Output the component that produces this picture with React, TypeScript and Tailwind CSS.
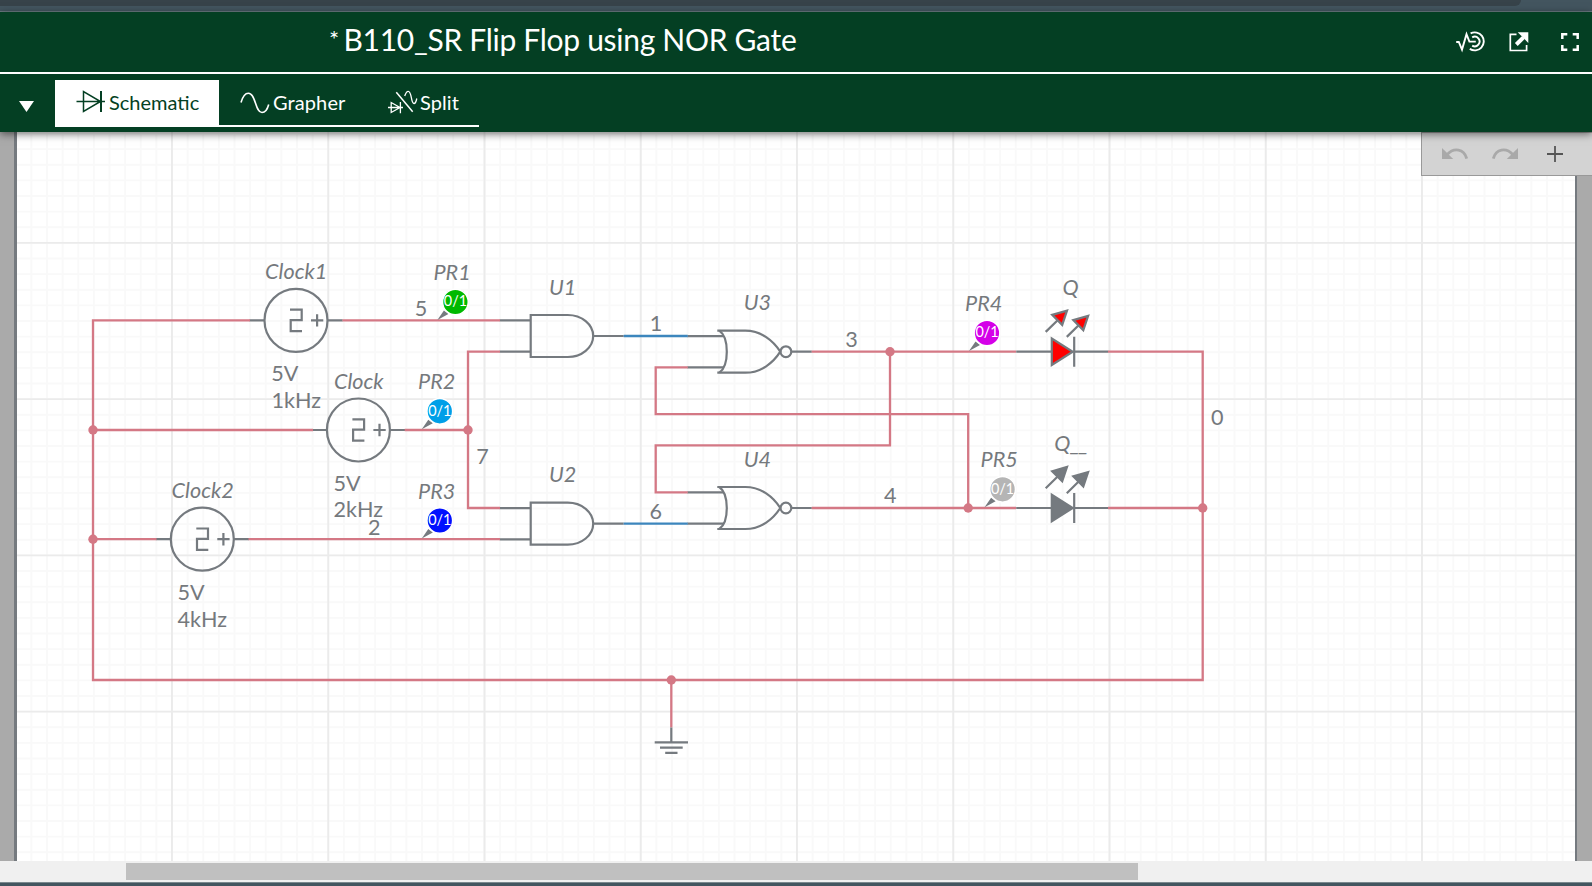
import React from "react";

const GRAY = "#757a7f";
const WIRE = "#d47885";
const BLUE = "#3c86bd";
const CELL = 15.625;

function Wire({ points, color = WIRE }: { points: string; color?: string }) {
  return <polyline points={points} fill="none" stroke={color} strokeWidth="2.3" />;
}

function Junction({ x, y }: { x: number; y: number }) {
  return <circle cx={x} cy={y} r="4.7" fill={WIRE} />;
}

function Label({ x, y, children, italic = false }: { x: number; y: number; children: React.ReactNode; italic?: boolean }) {
  return (
    <text x={italic ? x + 0.8 : x} y={y} fill="#75797d" fontSize="21.6" fontStyle={italic ? "italic" : "normal"}>
      {children}
    </text>
  );
}

function Clock({ x, y }: { x: number; y: number }) {
  return (
    <g transform={`translate(${x} ${y})`} fill="none" stroke={GRAY} strokeWidth="2.2">
      <circle r="31.5" />
      <path d="M-46.5 0H-31.5M31.5 0H46.7" />
      <path d="M-6-10.7H5.7V-.3H-5.3V10.7H6" />
      <path d="M15 0H27.3M21.1-6.2V6.2" />
    </g>
  );
}

function AndGate({ y }: { y: number }) {
  return (
    <g transform={`translate(530.7 ${y})`} fill="none" stroke={GRAY} strokeWidth="2.2">
      <path d="M0-21H37C51-21 62.5-11.5 62.5 0S51 21 37 21H0Z" />
      <path d="M-31-15.6H0M-31 15.6H0M62.5 0H93" />
    </g>
  );
}

function NorGate({ y }: { y: number }) {
  return (
    <g transform={`translate(717.3 ${y})`} fill="none" stroke={GRAY} strokeWidth="2.2">
      <path d="M0-21H28C44-21 56-11 63 0C56 11 44 21 28 21H0" />
      <path d="M2-21C12-14 12 14 2 21" />
      <path d="M-30-15.6H6M-30 15.6H6M74 0H94.5" />
      <circle cx="68.6" r="5.4" />
    </g>
  );
}

function Led({ y, fill }: { y: number; fill: string }) {
  return (
    <g transform={`translate(1074.2 ${y})`} stroke={GRAY} strokeWidth="2.2">
      <path d="M-58 0H-22M0 0H34M0-15V15" fill="none" />
      <path d="M-22.4-13.2V13.2L-1.5 0Z" fill={fill} />
      <path d="M-28.5-19.8L-15-33M-7.4-14.8L6-28" fill="none" />
      <path d="M-22-36.8L-7.2-41L-12-26.8Z" fill={fill} />
      <path d="M-.9-31.6L13.9-35.8L9.1-21.6Z" fill={fill} />
    </g>
  );
}

function Probe({ x, y, color }: { x: number; y: number; color: string }) {
  return (
    <g transform={`translate(${x} ${y})`}>
      <path d="M-18 18L-11.5 8.5L-7 12Z" fill={GRAY} />
      <circle r="12.8" fill={color} stroke="#fff" strokeWidth="1.4" />
      <text y="4.4" fill="#fff" fontSize="14.4" textAnchor="middle">
        0/1
      </text>
    </g>
  );
}

function Grid() {
  const cols = Array.from({ length: 100 }, (_, i) => i - 9);
  const rows = Array.from({ length: 47 }, (_, i) => i - 7);
  const vx = (i: number) => 172 + i * CELL;
  const hy = (i: number) => 242.9 + i * CELL;
  return (
    <g strokeWidth="1.9">
      {cols.map((i) => (
        <path key={`c${i}`} d={`M${vx(i)} 132V861`} stroke="#f9f9f9" />
      ))}
      {rows.map((i) => (
        <path key={`r${i}`} d={`M17 ${hy(i)}H1575`} stroke="#f9f9f9" />
      ))}
      {cols.filter((i) => i % 10 === 0).map((i) => (
        <path key={`C${i}`} d={`M${vx(i)} 132V861`} stroke="#ebebeb" />
      ))}
      {rows.filter((i) => i % 10 === 0).map((i) => (
        <path key={`R${i}`} d={`M17 ${hy(i)}H1575`} stroke="#ebebeb" />
      ))}
    </g>
  );
}

function Schematic() {
  return (
    <svg className="block h-full w-full" viewBox="0 132 1592 729">
      <rect x="0" y="132" width="1592" height="729" fill="#aaaaaa" />
      <rect x="14" y="132" width="1563" height="729" fill={GRAY} />
      <rect x="17" y="132" width="1558.3" height="729" fill="#fff" />
      <Grid />
      <rect x="1575" y="132" width="2" height="729" fill={GRAY} />
      <rect x="1577" y="132" width="15" height="729" fill="#aaaaaa" />

      <Clock x={296} y={320.4} />
      <Clock x={358.4} y={430} />
      <Clock x={202.3} y={539.2} />
      <AndGate y={336} />
      <AndGate y={523.7} />
      <NorGate y={351.7} />
      <NorGate y={508} />
      <Led y={351.7} fill="#ff0000" />
      <Led y={508} fill={GRAY} />

      <Wire points="250,320.4 93,320.4 93,680 1202.7,680 1202.7,351.7 1108,351.7" />
      <Wire points="93,430 313,430" />
      <Wire points="93,539.2 156.5,539.2" />
      <Wire points="342.5,320.4 500,320.4" />
      <Wire points="404.7,430 468,430" />
      <Wire points="500,351.7 468,351.7 468,508 500,508" />
      <Wire points="248.5,539.2 500,539.2" />
      <Wire points="623.7,336 687.7,336" color={BLUE} />
      <Wire points="623.7,523.7 687.7,523.7" color={BLUE} />
      <Wire points="811.7,351.7 1016,351.7" />
      <Wire points="890,351.7 890,445.4 655.7,445.4 655.7,492.3 687.7,492.3" />
      <Wire points="687.7,367.4 655.7,367.4 655.7,414.2 968.2,414.2 968.2,508" />
      <Wire points="811.7,508 1016,508" />
      <Wire points="1108,508 1202.7,508" />
      <Wire points="671.3,680 671.3,727.5" />
      <g fill="none" stroke={GRAY} strokeWidth="2.2">
        <path d="M671.3 727.5V742.3M654.7 742.3H688M660 747.6H682.7M665.2 752.8H677.5" />
      </g>
      <Junction x={93} y={430} />
      <Junction x={93} y={539.2} />
      <Junction x={468} y={430} />
      <Junction x={890} y={351.7} />
      <Junction x={968.2} y={508} />
      <Junction x={1202.7} y={508} />
      <Junction x={671.3} y={680} />

      <Probe x={455.4} y={302} color="#00b900" />
      <Probe x={439.8} y={411.3} color="#009fe8" />
      <Probe x={439.8} y={520.5} color="#0010ff" />
      <Probe x={987} y={333} color="#d400e8" />
      <Probe x={1002.6} y={489.3} color="#b5b5b5" />

      <Label x={264.3} y={279} italic>Clock1</Label>
      <Label x={333.2} y={388.5} italic>Clock</Label>
      <Label x={170.8} y={497.8} italic>Clock2</Label>
      <Label x={271.2} y={381}>5V</Label>
      <Label x={271.4} y={407.8}>1kHz</Label>
      <Label x={333.4} y={490.7}>5V</Label>
      <Label x={333.6} y={517}>2kHz</Label>
      <Label x={177.4} y={600}>5V</Label>
      <Label x={177.6} y={626.8}>4kHz</Label>
      <Label x={432.6} y={280} italic>PR1</Label>
      <Label x={417.3} y={389} italic>PR2</Label>
      <Label x={417.3} y={498.5} italic>PR3</Label>
      <Label x={964.3} y={311} italic>PR4</Label>
      <Label x={979.7} y={466.8} italic>PR5</Label>
      <Label x={548.2} y={295} italic>U1</Label>
      <Label x={548.2} y={482} italic>U2</Label>
      <Label x={743} y={309.8} italic>U3</Label>
      <Label x={743} y={466.6} italic>U4</Label>
      <Label x={1061.6} y={295} italic>Q</Label>
      <Label x={1053.4} y={451} italic>
        Q<tspan letterSpacing="-1.2">__</tspan>
      </Label>
      <Label x={414.8} y={315.5}>5</Label>
      <Label x={649.8} y={331}>1</Label>
      <Label x={649.5} y={518.6}>6</Label>
      <Label x={476.3} y={463.5}>7</Label>
      <Label x={368} y={535}>2</Label>
      <Label x={845.3} y={347}>3</Label>
      <Label x={884} y={503}>4</Label>
      <Label x={1211} y={424.5}>0</Label>
    </svg>
  );
}

function DiodeIcon() {
  return (
    <svg width="30" height="24" viewBox="0 0 30 24" fill="none" stroke="currentColor" strokeWidth="1.5">
      <path d="M.5 11.5H29M7.5 1.5V21.5L24.5 11.5Z" />
      <path d="M25 1V22" strokeWidth="2" />
    </svg>
  );
}

function SineIcon() {
  return (
    <svg width="30" height="24" viewBox="0 0 30 24" fill="none" stroke="currentColor" strokeWidth="1.6">
      <path d="M1 11.5C3 4.5 5.5 2.2 8.3 2.2C16 2.2 15 21.5 22 21.5C25.5 21.5 27.5 18 28.7 13.5" />
    </svg>
  );
}

function SplitIcon() {
  return (
    <svg width="30" height="24" viewBox="0 0 30 24" fill="none" stroke="currentColor" strokeWidth="1.3">
      <path d="M0 17.5H15M3.2 12.5V22.5L12 17.5ZM12.4 12V23.3" />
      <path d="M8.3 2.3L24.7 21.7" strokeWidth="1.5" />
      <path d="M16.7 6C17.7 3 18.7 1.3 20.2 1.3C24 1.3 22.7 13.5 26 13.5C27.6 13.5 28.3 11 28.8 8.5" />
    </svg>
  );
}

function InteractiveIcon() {
  return (
    <svg width="29" height="22" viewBox="0 0 29 22" fill="none" stroke="currentColor" strokeWidth="1.9">
      <path d="M.2 11H2.8L6 18.6L10.5 3.2L13.4 10.6H19.8" />
      <path d="M14.6 2.4A9 9 0 1 1 13.8 17.9" />
      <path d="M16.2 6.4A4.8 4.8 0 1 1 16.2 14.6" />
    </svg>
  );
}

function OpenIcon() {
  return (
    <svg width="20" height="20" viewBox="0 0 20 20" fill="none" stroke="currentColor">
      <path d="M7.5 2.3H1.3V18.5H17.6V13" strokeWidth="1.7" />
      <path d="M7.3 12.5L14.5 5.3" strokeWidth="4" />
      <path d="M8.7.3H19.3V10.9Z" fill="currentColor" stroke="none" />
    </svg>
  );
}

function FullscreenIcon() {
  return (
    <svg width="18" height="18" viewBox="0 0 18 18" fill="none" stroke="currentColor" strokeWidth="2.5">
      <path d="M1.3 6V1.3H6.3M11.7 1.3H16.7V6M16.7 12V16.7H11.7M6.3 16.7H1.3V12" />
    </svg>
  );
}

function UndoIcon({ flip = false }: { flip?: boolean }) {
  return (
    <svg width="26" height="12" viewBox="0 0 26 12" className={flip ? "-scale-x-100" : ""} fill="none">
      <path d="M0 0V11H11.2Z" fill="#a9a9a9" />
      <path d="M5 6.8C12-1 22 1 24.7 10.5" stroke="#a9a9a9" strokeWidth="2.8" />
    </svg>
  );
}

export default function App() {
  return (
    <div className="flex h-[886px] w-[1592px] flex-col overflow-hidden bg-[#43555f] font-['Lato',sans-serif]">
      <div className="h-[12px] shrink-0 border-b border-[#6c7b82]">
        <div className="h-[6px] w-[1521px] rounded-br-[9px] bg-[#37434a]" />
      </div>

      <header className="z-10 shrink-0 bg-[#043f23] text-white shadow-[0_2px_8px_rgba(0,0,0,0.55)]">
        <div className="flex h-[62px] items-center justify-between border-b-2 border-white pl-[329px] pr-[13px]">
          <h1 className="flex items-center whitespace-nowrap pb-[6px] leading-none">
            <span className="w-[14.5px] text-[24px]">*</span>
            <span className="text-[30px] tracking-[-0.29px]">B110_SR Flip Flop using NOR Gate</span>
          </h1>
          <div className="flex items-center">
            <InteractiveIcon />
            <span className="ml-[24px]"><OpenIcon /></span>
            <span className="ml-[32px]"><FullscreenIcon /></span>
          </div>
        </div>
        <div className="flex h-[58px] pt-[6px]">
          <div className="flex w-[55px] pl-[19px] pt-[21px]">
            <svg width="15" height="11" viewBox="0 0 15 11">
              <path d="M0 0H15L7.5 11Z" fill="currentColor" />
            </svg>
          </div>
          <nav className="flex h-[47px] text-[20px] leading-none">
            <div className="flex w-[164px] items-center bg-white pl-[21px] text-[#043f23]">
              <span className="-mt-[3px]"><DiodeIcon /></span>
              <span className="ml-[3px] pb-[4px]">Schematic</span>
            </div>
            <div className="flex w-[260px] items-center border-b-2 border-white pl-[21px]">
              <SineIcon />
              <span className="ml-[3px] w-[115px] pb-[2px] tracking-[0.1px]">Grapher</span>
              <span className="-mt-[2px]"><SplitIcon /></span>
              <span className="ml-[2px] pb-[2px] tracking-[0.1px]">Split</span>
            </div>
          </nav>
        </div>
      </header>

      <main className="relative h-[729px] shrink-0">
        <Schematic />
        <div className="absolute right-0 top-0 flex h-[44px] w-[171px] items-center border border-r-0 border-[#999] bg-[#d3d3d3] pl-[20px]">
          <UndoIcon />
          <span className="ml-[24px]"><UndoIcon flip /></span>
          <svg className="ml-[29px]" width="16" height="16" viewBox="0 0 16 16" stroke="#555" strokeWidth="1.8">
            <path d="M0 8H16M8 0V16" />
          </svg>
        </div>
      </main>

      <div className="flex h-[21px] shrink-0 items-center bg-[#f0f0f0] pl-[126px]">
        <div className="h-[17px] w-[1012px] bg-[#c0c0c0]" />
      </div>
      <div className="h-[4px] shrink-0 border-t border-[#7b888e] bg-[#43555f]" />
    </div>
  );
}
